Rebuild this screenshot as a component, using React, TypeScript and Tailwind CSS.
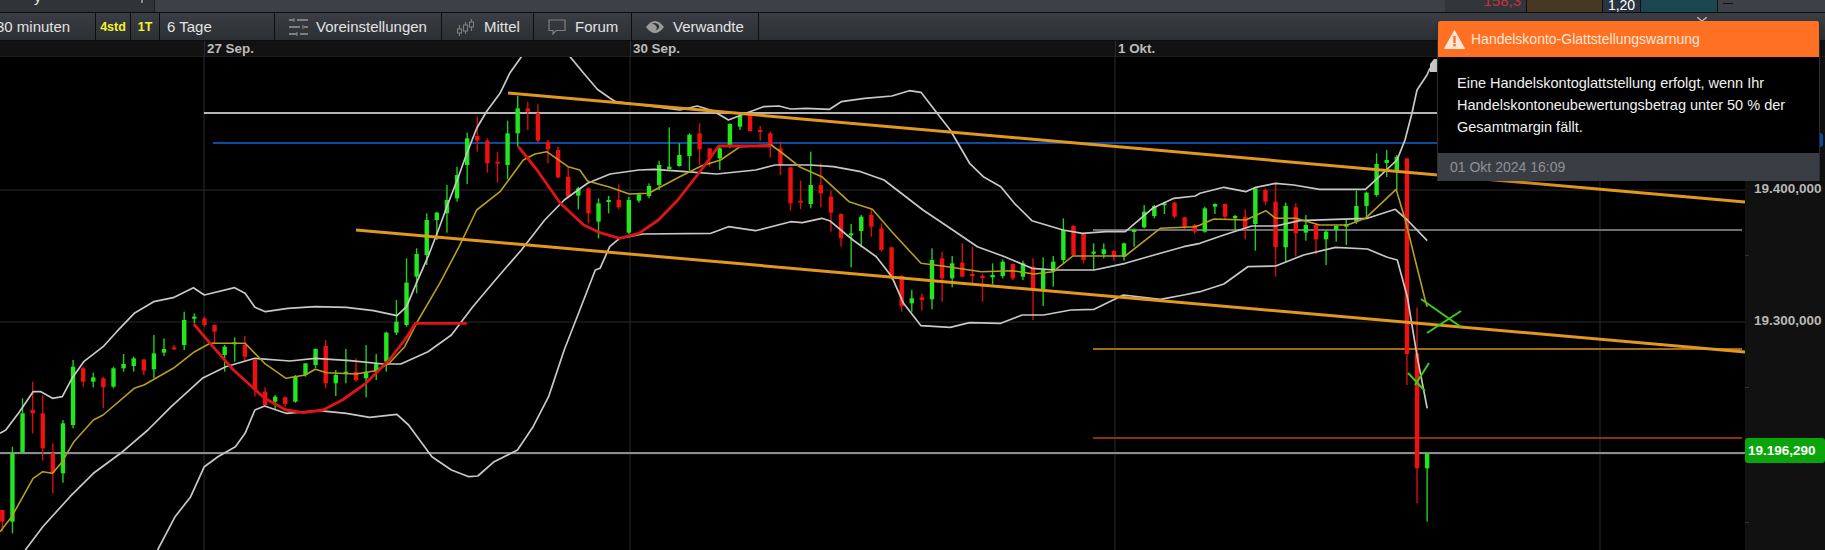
type Pt = [number, number];
type Candle = [number, number, number, number];

const fromA = (pts: Pt[]) => pts.map(([x, y]) => `${(x / 2.57).toFixed(1)},${(y / 3 + 50).toFixed(1)}`);
const fromB = (pts: Pt[]) => pts.map(([x, y]) => `${(600 + x / 2.57).toFixed(1)},${(y / 3 + 50).toFixed(1)}`);
const fromC = (pts: Pt[]) => pts.map(([x, y]) => `${(1200 + x / 2.509).toFixed(1)},${(y / 3 + 150).toFixed(1)}`);

const upperBand = [
  ...fromA([[0,1150],[15,1140],[50,1085],[85,1025],[105,1025],[135,1045],[160,1040],[185,985],[215,935],[265,890],[300,845],[345,790],[395,755],[445,743],[497,713],[525,735],[603,713],[630,730],[655,772],[682,785],[740,775],[810,770],[890,772],[960,782],[1020,797],[1045,770],[1070,700],[1100,620],[1125,545],[1150,465],[1175,390],[1200,310],[1225,235],[1250,185],[1285,130],[1310,70],[1340,20],[1350,0]]),
  ...fromA([[1455,0],[1465,20],[1500,70],[1535,118]]),
  ...fromB([[26,145],[40,155],[205,180],[250,168],[290,182],[330,210],[375,190],[420,170],[460,168],[490,177],[530,175],[590,178],[620,155],[680,145],[750,138],[795,122],[825,127],[860,180],[900,240],[950,340],[985,380],[1030,410],[1065,460],[1110,512],[1190,540],[1240,550],[1300,545],[1350,545],[1380,515],[1420,475],[1475,445],[1530,438]]),
  ...fromC([[0,130],[60,112],[115,125],[140,112],[190,100],[235,105],[300,118],[415,118],[445,85]]),
  '1397,160', '1405,140', '1412,113', '1417,90', '1427,75', '1430,68',
].join(' ');

const midBand = [
  ...fromA([[65,1500],[110,1430],[180,1340],[240,1270],[310,1210],[380,1140],[440,1070],[520,985],[580,950],[655,925],[745,933],[810,925],[900,932],[985,942],[1030,942],[1100,905],[1160,855],[1215,770],[1280,680],[1340,600],[1400,510],[1450,450],[1510,400]]),
  ...fromB([[26,372],[100,360],[140,358],[220,365],[300,372],[400,360],[450,345],[540,345],[600,350],[670,365],[730,390],[830,480],[900,535],[970,590],[1040,620],[1110,655],[1170,660],[1270,660],[1350,640],[1440,610],[1500,590]]),
  ...fromC([[0,280],[60,255],[130,228],[190,228],[250,212],[340,208],[420,205],[490,178],[520,210],[570,272]]),
].join(' ');

const lowerBand = [
  ...fromA([[405,1500],[450,1400],[490,1340],[525,1250],[560,1220],[605,1190],[630,1150],[655,1080],[680,1068],[735,1090],[820,1082],[890,1090],[950,1102],[1020,1093],[1050,1125],[1110,1220],[1160,1260],[1205,1280],[1228,1278],[1270,1235],[1330,1200],[1370,1130],[1410,1040],[1450,900],[1490,780],[1530,660]]),
  ...fromB([[0,655],[25,590],[50,565],[110,552],[285,550],[330,530],[400,542],[490,515],[520,518],[570,505],[590,512],[650,570],[710,620],[750,680],[780,760],[825,827],[900,832],[950,818],[1030,820],[1085,795],[1140,795],[1210,780],[1270,778],[1345,735],[1440,748],[1500,735]]),
  ...fromC([[0,425],[60,402],[120,350],[190,348],[260,315],[340,292],[420,297],[470,322],[495,330],[520,440],[545,620],[570,775]]),
].join(' ');

const average = [
  ...fromA([[0,1445],[30,1400],[85,1285],[110,1265],[135,1270],[160,1235],[190,1175],[240,1110],[265,1095],[345,1015],[370,1005],[445,955],[500,905],[540,880],[630,880],[680,940],[735,985],[785,975],[810,958],[840,968],[915,972],[965,962],[1000,940],[1040,890],[1075,810],[1130,700],[1180,590],[1225,480],[1285,425],[1345,330],[1375,312],[1405,305],[1460,350],[1490,360],[1510,393]]),
  ...fromB([[26,412],[75,432],[125,430],[205,380],[260,348],[310,330],[360,290],[440,285],[475,315],[515,352],[570,380],[640,455],[700,478],[750,545],[825,640],[880,648],[980,665],[1060,662],[1115,672],[1165,665],[1215,618],[1350,618],[1440,535],[1530,530]]),
  ...fromC([[0,225],[35,207],[115,210],[165,182],[190,205],[240,205],[300,225],[370,225],[415,205],[492,118],[515,210],[540,330],[565,450],[570,470]]),
].join(' ');

const cupLeft = fromA([[498,822],[540,880],[600,960],[680,1045],[735,1080],[780,1088],[830,1080],[880,1050],[940,1000],[1000,930],[1040,870],[1068,820],[1200,820]]).join(' ');
const cupRight = [
  ...fromA([[1332,290],[1380,360],[1440,460],[1500,525]]),
  ...fromB([[0,548],[50,565],[100,550],[150,510],[200,450],[260,360],[305,288],[440,288]]),
].join(' ');

const g = 'g';
const r = 'r';
// hi, top, bottom, lo for each bar in order, prefixed by colour
const bars: [string, ...Candle][] = [
  [r,1380,1380,1415,1445],[g,1190,1210,1415,1450],[g,1045,1090,1208,1208],[r,995,1080,1090,1150],[r,1035,1090,1195,1232],
  [r,1180,1210,1268,1330],[g,1110,1120,1270,1298],[g,930,950,1125,1135],[r,950,955,995,1010],[g,968,982,995,1012],
  [r,980,985,1012,1075],[g,950,955,1010,1015],[g,912,942,955,965],[g,920,925,948,965],[r,928,928,962,975],
  [g,855,910,958,985],[g,865,897,908,918],[r,885,892,895,900],[g,785,810,885,900],[g,790,800,803,820],
  [r,800,805,825,830],[r,825,825,845,880],[g,885,890,915,965],[g,862,877,880,935],[r,858,885,920,935],
  [r,925,930,1020,1040],[r,1012,1025,1065,1072],[g,1035,1040,1055,1078],[r,1040,1042,1062,1070],[g,975,980,1055,1058],
  [g,940,940,975,980],[g,895,897,945,955],[r,870,888,1000,1015],[g,960,975,1000,1038],[g,897,965,970,1000],
  [r,925,965,990,995],[g,885,965,985,1042],[g,912,940,965,990],[g,845,848,935,965],[g,750,815,848,855],
  [g,625,698,825,830],[g,595,612,680,730],[g,490,510,615,645],[g,485,488,510,570],[g,405,450,490,548],
  [g,350,375,445,455],[g,248,265,345,402],[r,200,258,272,305],[r,265,272,340,368],[r,305,335,340,398],
  [g,212,250,345,388],[g,138,175,250,290],[r,155,175,185,240],[r,163,190,272,278],[r,270,275,298,340],
  [r,290,300,382,385],[r,350,380,440,445],[g,410,415,437,478],[r,412,415,490,520],[g,445,460,515,565],
  [g,438,450,455,490],[r,403,450,472,478],[g,440,450,548,552],[g,430,433,452,458],[g,400,408,438,445],
  [g,332,345,405,420],[g,232,350,357,358],[g,280,315,348,350],[g,250,254,318,365],[r,220,250,298,345],
  [r,295,295,325,350],[g,290,295,325,360],[g,220,222,285,295],[g,195,198,230,240],[r,190,195,243,245],
  [r,228,240,243,272],[r,245,250,285,322],[r,275,295,345,375],[r,350,352,460,482],[r,392,452,455,478],
  [g,305,405,462,475],[r,340,405,430,472],[r,422,440,488,545],[r,490,492,565,590],[g,522,550,553,652],
  [g,495,500,543,592],[r,478,495,530,560],[r,520,535,600,605],[r,590,592,685,690],[r,675,678,768,785],
  [g,720,745,760,785],[r,730,742,750,782],[g,595,630,748,778],[r,605,625,685,755],[g,618,640,685,712],
  [r,580,638,680,682],[r,590,672,675,705],[r,672,678,682,755],[g,640,675,682,703],[g,628,635,678,685],
  [r,640,642,685,690],[g,632,640,680,690],[r,625,650,718,810],[g,622,660,720,768],[g,618,635,665,710],
  [g,505,540,630,640],[r,525,528,615,618],[r,550,552,630,640],[g,580,605,610,660],[g,580,598,612,625],
  [r,600,603,620,632],[g,578,580,620,632],[g,535,540,545,590],[g,465,485,532,535],[g,465,468,498,505],
  [g,455,460,462,492],[r,455,458,500,505],[r,500,502,530,538],[r,522,525,545,552],[g,470,475,545,548],
  [g,460,462,470,492],[r,460,462,500,508],[g,495,498,505,540],[r,478,500,535,568],[g,412,415,522,602],
  [r,415,420,455,465],[r,398,455,592,680],[g,458,468,592,635],[r,460,472,550,620],[g,495,525,548,572],
  [r,522,525,568,612],[g,540,545,568,645],[g,525,528,540,575],[g,508,522,530,585],[g,422,468,515,522],
  [g,425,428,468,505],[g,310,342,435,440],[g,300,330,339,381],[g,315,320,360,418],[r,325,325,912,1005],
  [r,772,910,1255,1360],[g,1210,1210,1255,1415],
];

function Chart() {
  return (
    <svg viewBox="0 57 1745 493" className="block h-[493px] w-[1745px] shrink-0">
      <g stroke="#2b2b2b" strokeWidth="1">
        {[204, 630, 1115, 1600].map((x) => (
          <line key={x} x1={x} y1="57" x2={x} y2="550" />
        ))}
        {[190, 322, 454].map((y) => (
          <line key={y} x1="0" y1={y} x2="1745" y2={y} />
        ))}
      </g>
      <line x1="204" y1="113" x2="1440" y2="113" stroke="#f2f2f2" strokeWidth="1.6" />
      <line x1="213" y1="143" x2="1440" y2="143" stroke="#0d4ba0" strokeWidth="1.8" />
      <line x1="0" y1="453" x2="1745" y2="453" stroke="#8c8c8c" strokeWidth="1.8" />
      <line x1="1093" y1="230" x2="1742" y2="230" stroke="#6f6f6f" strokeWidth="1.8" />
      <line x1="1093" y1="349" x2="1742" y2="349" stroke="#a06c14" strokeWidth="1.8" />
      <line x1="1093" y1="438" x2="1742" y2="438" stroke="#8b3010" strokeWidth="1.8" />

      {bars.map(([c, hi, top, bottom, lo], i) => {
        const x = 2.33 + i * 10.105;
        const fill = c === 'g' ? '#22e61e' : '#f01010';
        return (
          <g key={i} fill={fill}>
            <rect x={x - 0.7} y={hi / 3 + 50} width="1.4" height={(lo - hi) / 3} opacity="0.9" />
            <rect x={x - 2.2} y={top / 3 + 50} width="4.4" height={Math.max(bottom - top, 6) / 3} />
          </g>
        );
      })}

      <g fill="none" strokeLinejoin="round">
        <polyline points={upperBand} stroke="#c8c8c8" strokeWidth="1.7" />
        <polyline points={midBand} stroke="#c8c8c8" strokeWidth="1.7" />
        <polyline points={lowerBand} stroke="#c8c8c8" strokeWidth="1.7" />
        <polyline points={average} stroke="#b79f1e" strokeWidth="1.6" />
        <line x1="508" y1="93" x2="1745" y2="202" stroke="#e2981f" strokeWidth="3" />
        <line x1="356" y1="230" x2="1745" y2="352" stroke="#e2981f" strokeWidth="3" />
        <polyline points={cupLeft} stroke="#e01414" strokeWidth="2.8" />
        <polyline points={cupRight} stroke="#e01414" strokeWidth="2.8" />
      </g>
      <polygon points="1430,72 1430,64 1434,59 1437,59 1437,72" fill="#c8c8c8" />
      <g stroke="#3ecb1c" strokeWidth="2" fill="none">
        <line x1="1421" y1="299" x2="1461" y2="327" />
        <line x1="1427" y1="333" x2="1461" y2="311" />
        <line x1="1408" y1="373" x2="1425" y2="391" />
        <line x1="1415" y1="385" x2="1429" y2="363" />
      </g>
    </svg>
  );
}

function PriceAxis() {
  return (
    <div className="relative flex h-[493px] flex-1 flex-col items-start bg-[#111] pl-[9px] text-[13.5px] font-bold leading-[20px] text-[#b9b9b9]">
      <div className="mt-[122px]">19.400,000</div>
      <div className="mt-[112px]">19.300,000</div>
      <div className="-ml-[9px] mt-[107px] flex h-[25px] w-[80px] items-center rounded-[3px] bg-[#0aa50a] pl-[3px] font-bold text-white">
        19.196,290
      </div>
      {[198, 330, 465].map((y) => (
        <div key={y} className="absolute left-0 h-px w-[4px] bg-[#333]" style={{ top: y }} />
      ))}
    </div>
  );
}

function SlidersIcon() {
  return (
    <svg width="19" height="18" viewBox="0 0 19 18" fill="none" stroke="#7f7f7f" strokeWidth="2">
      <path d="M0 2h5M8 2h11M0 9h11M15 9h4M0 16h8M11 16h8" />
      <path d="M5 0v4M14 7v4M8 14v4" strokeWidth="1.2" />
    </svg>
  );
}

function CandlesIcon() {
  return (
    <svg width="17" height="17" viewBox="0 0 17 17" fill="none" stroke="#7f7f7f" strokeWidth="1.1">
      <path d="M2.5 6v11M8.5 3v12M14.5 0v12" />
      <rect x="0.5" y="10" width="4" height="4" fill="#2f3236" />
      <rect x="6.5" y="6" width="4" height="6" fill="#2f3236" />
      <rect x="12.5" y="3" width="4" height="5" fill="#2f3236" />
    </svg>
  );
}

function BubbleIcon() {
  return (
    <svg width="18" height="16" viewBox="0 0 18 16" fill="none" stroke="#7f7f7f" strokeWidth="1.2">
      <path d="M1 1h16v10.5H8L5 15v-3.5H1z" />
    </svg>
  );
}

function EyeIcon() {
  return (
    <svg width="18" height="12" viewBox="0 0 18 12">
      <path d="M0 6C3 2 6 0 9 0s6 2 9 6c-3 4-6 6-9 6s-6-2-9-6z" fill="#9a9a9a" />
      <path d="M6 2.5c3-1 6 0 7 2 .8 2.5-1 4-3.5 5 1.6-1.6 1.6-3 .8-4-1-1.8-2.8-2.8-4.3-3z" fill="#2f3236" />
    </svg>
  );
}

function Toolbar() {
  const cell = 'flex h-full shrink-0 items-center border-r border-[#0e0e0e] pt-px';
  return (
    <div className="flex h-[28px] border-b border-[#0e0e0e] bg-gradient-to-b from-[#3a3e44] to-[#2c2f33] text-[15px] text-[#e2e2e2]">
      <div className={`${cell} w-[96px]`}>
        <span className="-ml-[4px]">30 minuten</span>
      </div>
      <div className={`${cell} w-[35px] justify-center text-[12.5px] font-bold text-[#f4f42c]`}>4std</div>
      <div className={`${cell} w-[29px] justify-center text-[12.5px] font-bold text-[#f4f42c]`}>1T</div>
      <div className={`${cell} w-[115px] pl-[7px]`}>6 Tage</div>
      <div className={`${cell} w-[167px] gap-[8px] pl-[14px]`}>
        <SlidersIcon />
        Voreinstellungen
      </div>
      <div className={`${cell} w-[92px] gap-[10px] pl-[15px]`}>
        <CandlesIcon />
        Mittel
      </div>
      <div className={`${cell} w-[98px] gap-[9px] pl-[14px]`}>
        <BubbleIcon />
        Forum
      </div>
      <div className={`${cell} w-[127px] gap-[9px] pl-[14px]`}>
        <EyeIcon />
        Verwandte
      </div>
    </div>
  );
}

function TopStrip() {
  return (
    <div className="flex h-[13px] overflow-hidden border-b border-[#0e0e0e] bg-[#3d4147]">
      <div className="relative h-full w-[155px] shrink-0 border-r border-[#1c1c1c] bg-[#303338]">
        <span className="absolute left-[34px] top-[-12px] text-[15px] leading-[18px] text-[#e2e2e2]">y</span>
        <div className="absolute left-[141px] top-0 h-[3px] w-[2px] bg-[#8a8a8a]" />
      </div>
      <div className="flex-1" />
      <div className="relative h-full w-[81px] shrink-0 bg-[#32353a]">
        <span className="absolute right-[5px] top-[-8px] text-[15px] leading-[18px] text-[#c2343c]">158,3</span>
      </div>
      <div className="h-full w-[77px] shrink-0 border-x border-[#111] bg-[#463823]" />
      <div className="flex h-full w-[37px] shrink-0 items-center justify-center bg-[#2a3340] pb-[2px] text-[14px] text-white">1,20</div>
      <div className="h-full w-[78px] shrink-0 border-x border-[#111] bg-[#1b4750]" />
      <div className="flex h-full w-[107px] shrink-0 items-start pl-[5px] pt-[3px]">
        <div className="h-px w-[10px] bg-[#111]" />
      </div>
    </div>
  );
}

function DateRow() {
  const label = 'border-l border-[#2b2b2b] pl-[2px]';
  return (
    <div className="flex h-[16px] items-center border-b border-[#1c1c1c] bg-[#121212] text-[13.4px] font-bold leading-[16px] text-[#bdbdbd]">
      <div className="w-[204px] shrink-0" />
      <div className={`${label} w-[426px] shrink-0`}>27 Sep.</div>
      <div className={`${label} w-[485px] shrink-0`}>30 Sep.</div>
      <div className={`${label} flex-1`}>1 Okt.</div>
    </div>
  );
}

function MarginAlert() {
  return (
    <div className="absolute left-[1437px] top-[21px] w-[383px] overflow-hidden rounded-t-[3px] border-x border-[#2b2e32] text-[14px] shadow-md">
      <div className="flex h-[36px] items-center gap-[6px] bg-[#ff7022] pl-[6px] text-[#ffe6d6]">
        <svg width="21" height="19" viewBox="0 0 21 19">
          <path d="M10.5 0.5 L20.5 18.5 H0.5 Z" fill="#ffe6d6" stroke="#ffe6d6" strokeLinejoin="round" />
          <rect x="9.3" y="6" width="2.4" height="7" fill="#ff7022" />
          <rect x="9.3" y="14" width="2.4" height="2.4" fill="#ff7022" />
        </svg>
        Handelskonto-Glattstellungswarnung
      </div>
      <div className="h-[96px] bg-black pl-[19px] pr-[10px] pt-[15px] text-[14.5px] leading-[22px] text-[#f0f0f0]">
        Eine Handelskontoglattstellung erfolgt, wenn Ihr
        <br />
        Handelskontoneubewertungsbetrag unter 50 % der
        <br />
        Gesamtmargin fällt.
      </div>
      <div className="flex h-[28px] items-center bg-[#3a3e44] pl-[12px] text-[#8d9196]">01 Okt 2024 16:09</div>
    </div>
  );
}

export default function App() {
  return (
    <div className="relative h-[550px] w-[1825px] overflow-hidden bg-black font-['Liberation_Sans',Arial,sans-serif]">
      <TopStrip />
      <Toolbar />
      <DateRow />
      <div className="flex">
        <Chart />
        <PriceAxis />
      </div>
      <div className="absolute left-[1820px] top-[133px] h-[14px] w-[3px] rounded-r bg-[#0d4ba0]" />
      <svg className="absolute left-[1697px] top-[17px]" width="10" height="5" viewBox="0 0 10 5" fill="none" stroke="#b0b0b0" strokeWidth="1.4">
        <path d="M0 0l5 4 5-4" />
      </svg>
      <MarginAlert />
    </div>
  );
}
